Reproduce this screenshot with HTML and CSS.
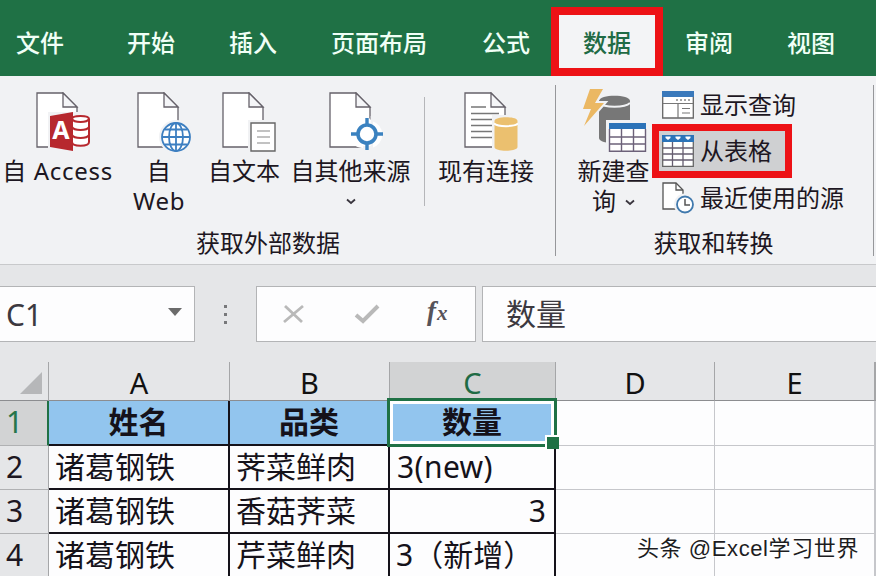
FILE: index.html
```html
<!DOCTYPE html>
<html lang="zh-CN">
<head>
<meta charset="utf-8">
<title>Excel</title>
<link rel="stylesheet" href="styles.css">
</head>
<body>
<div class="app">
  <nav class="tabs">
    <span class="tab tab-file">文件</span>
    <span class="tab">开始</span>
    <span class="tab">插入</span>
    <span class="tab">页面布局</span>
    <span class="tab tab-formula">公式</span>
    <span class="tab tab-active">数据</span>
    <span class="tab tab-review">审阅</span>
    <span class="tab">视图</span>
  </nav>

  <section class="ribbon">
    <div class="group group-external">
      <div class="tools">
        <div class="tool tool-access">
          <svg class="icon" width="54" height="60" viewBox="0 0 54 60">
            <path class="page" d="M1 1H27L41 15V55H1Z"/>
            <path class="fold" d="M27 1V15H41Z"/>
            <path d="M12 20H54V60H12Z" fill="#f1f2f4"/>
            <path d="M36 27C36 23 53 23 53 27V50C53 55 36 55 36 50Z" fill="#fff" stroke="#b7282e" stroke-width="2"/>
            <path d="M36 27C38 31 51 31 53 27M36 35C38 39 51 39 53 35M36 43C38 47 51 47 53 43" fill="none" stroke="#b7282e" stroke-width="2"/>
            <path d="M14 24L37 20V59L14 55Z" fill="#b7282e"/>
            <text x="25" y="47" class="access-letter">A</text>
          </svg>
          <span class="latin-label">自 Access</span>
        </div>
        <div class="tool tool-web">
          <svg class="icon" width="54" height="60" viewBox="0 0 54 60">
            <path class="page" d="M1 1H27L41 15V55H1Z"/>
            <path class="fold" d="M27 1V15H41Z"/>
            <circle cx="39" cy="45" r="17" fill="#f1f2f4"/>
            <circle cx="39" cy="45" r="14" fill="#fff"/>
            <g fill="none" stroke="#3d7fc1" stroke-width="1.8">
              <circle cx="39" cy="45" r="14"/>
              <ellipse cx="39" cy="45" rx="7" ry="14"/>
              <path d="M39 31V59M25 45H53M28 37.5H50M28 52.5H50"/>
            </g>
          </svg>
          <span class="latin-label">自<br>Web</span>
        </div>
        <div class="tool tool-text">
          <svg class="icon" width="54" height="60" viewBox="0 0 54 60">
            <path class="page" d="M1 1H27L41 15V55H1Z"/>
            <path class="fold" d="M27 1V15H41Z"/>
            <path d="M26 28H54V60H26Z" fill="#f1f2f4"/>
            <path d="M29 31H53V59H29Z" fill="#fff" stroke="#666" stroke-width="1.4"/>
            <path d="M35 39H48M35 45H48M35 51H48" stroke="#858585" stroke-width="1.2"/>
          </svg>
          <span>自文本</span>
        </div>
        <div class="tool tool-other">
          <svg class="icon" width="54" height="60" viewBox="0 0 54 60">
            <path class="page" d="M1 1H27L41 15V55H1Z"/>
            <path class="fold" d="M27 1V15H41Z"/>
            <path d="M38 24L43 29A14 14 0 0 1 43 56H33A14 14 0 0 1 20 42A16 16 0 0 1 33 29Z" fill="#fff"/>
            <path d="M41.700 24H44V60H34V54H41.700Z" fill="#f1f2f4"/>
            <circle cx="38" cy="42" r="9" fill="#fff" stroke="#3b82c0" stroke-width="3.600"/>
            <path d="M38 26V34M38 50V58M22 42H30M46 42H54" stroke="#3b82c0" stroke-width="3.400"/>
          </svg>
          <span>自其他来源</span>
          <svg class="chevron" width="10" height="7" viewBox="0 0 10 7"><path d="M1 1.5L5 5L9 1.5"/></svg>
        </div>
        <div class="tool-separator"></div>
        <div class="tool tool-existing">
          <svg class="icon" width="54" height="60" viewBox="0 0 54 60">
            <path class="page" d="M1 1H27L41 15V55H1Z"/>
            <path class="fold" d="M27 1V15H41Z"/>
            <path d="M7 15H22M7 21.500H35M7 27.500H35M7 33.500H28M7 39.500H28M7 45.500H28" stroke="#777" stroke-width="1.3"/>
            <path d="M28 23H56V60H28Z" fill="#f1f2f4"/>
            <path d="M30.500 29C30.500 24 53.500 24 53.500 29V55C53.500 60 30.500 60 30.500 55Z" fill="#ebc06f"/>
            <path d="M30 31.500C34 35 50 35 54 31.500" fill="none" stroke="#fff" stroke-width="2"/>
          </svg>
          <span>现有连接</span>
        </div>
      </div>
      <div class="group-name">获取外部数据</div>
    </div>

    <div class="group group-transform">
      <div class="tools">
        <div class="tool tool-query">
          <svg class="icon-query" width="66" height="64" viewBox="0 0 66 64">
            <path d="M17 13C17 6 48 6 48 13V50C48 57 17 57 17 50Z" fill="#777"/>
            <path d="M17 15C22 20 43 20 48 15" fill="none" stroke="#f1f2f4" stroke-width="1.800"/>
            <path d="M8 1L1 21H9L2 38L22 15H13L21 1Z" fill="#ebb863" stroke="#f1f2f4" stroke-width="4" paint-order="stroke"/>
            <path d="M24 32H66V64H24Z" fill="#f1f2f4"/>
            <path d="M27 36H63V64H27Z" fill="#fff"/>
            <path d="M27.500 41V63.300H63.500V41M27 49H64M27 56H64M39.500 41V63M51.500 41V63" fill="none" stroke="#6c6179" stroke-width="1.400"/>
            <path d="M27 35H64V41H27Z" fill="#2c73b8"/>
          </svg>
          <span>新建查<br>询 <svg class="chevron inline" width="10" height="7" viewBox="0 0 10 7"><path d="M1 1.5L5 5L9 1.5"/></svg></span>
        </div>
        <div class="commands">
          <div class="command">
            <svg width="32" height="28" viewBox="0 0 32 28">
              <path d="M.7 1H31.300V27H.7Z" fill="#fff" stroke="#666" stroke-width="1.300"/>
              <path d="M0 0H32V6H0Z" fill="#3a79bb"/>
              <path d="M1 12.500H31M16 12.500V27" stroke="#777" stroke-width="1.200"/>
              <path d="M14 9H29" stroke="#888" stroke-width="1.500" stroke-dasharray="2 2"/>
              <path d="M20 17.500H28M20 22H28" stroke="#777" stroke-width="1.200"/>
            </svg>
            <span>显示查询</span>
          </div>
          <div class="command command-marked">
            <svg width="32" height="32" viewBox="0 0 32 32">
              <path d="M.7 1H31.300V31.300H.7Z" fill="#fff" stroke="#666" stroke-width="1.300"/>
              <path d="M1 13H31M1 19H31M1 25H31M10.500 6V31M21 6V31" stroke="#665d70" stroke-width="1.300"/>
              <path d="M0 0H32V7H0Z" fill="#2c73b8"/>
              <path d="M3.500 1.500H8.500V3L6 5L3.500 3ZM13.500 1.500H18.500V3L16 5L13.500 3ZM23.500 1.500H28.500V3L26 5L23.500 3Z" fill="#fff"/>
            </svg>
            <span>从表格</span>
          </div>
          <div class="command">
            <svg width="32" height="32" viewBox="0 0 32 32">
              <path d="M1 1H14L21 8V27H1Z" fill="#fff" stroke="#555" stroke-width="1.300"/>
              <path d="M14 1V8H21" fill="none" stroke="#555" stroke-width="1.300"/>
              <circle cx="23" cy="22.500" r="11" fill="#f1f2f4"/>
              <circle cx="23" cy="22.500" r="8" fill="#fff" stroke="#4079ad" stroke-width="1.800"/>
              <path d="M23 17V23H28" fill="none" stroke="#555" stroke-width="1.500"/>
            </svg>
            <span>最近使用的源</span>
          </div>
        </div>
      </div>
      <div class="group-name">获取和转换</div>
    </div>
  </section>

  <section class="formula-bar">
    <div class="name-box"><span>C1</span>
      <svg width="14" height="8" viewBox="0 0 14 8"><path d="M0 0H14L7 8Z" fill="#6b6b6b"/></svg>
    </div>
    <div class="grip"><i></i><i></i><i></i></div>
    <div class="entry-tools">
      <svg width="22" height="20" viewBox="0 0 22 20"><path d="M2 2L19 18M20 2L1 18" stroke="#b9b9b9" stroke-width="2.800" fill="none"/></svg>
      <svg width="26" height="20" viewBox="0 0 26 20"><path d="M2 11L9 17L24 2" stroke="#b9b9b9" stroke-width="4" fill="none"/></svg>
      <span class="fx">f<small>x</small></span>
    </div>
    <div class="formula-input">数量</div>
  </section>

  <section class="sheet">
    <div class="head corner"><svg width="22" height="22" viewBox="0 0 22 22"><path d="M22 0V22H0Z" fill="#b6b7b9"/></svg></div>
    <div class="head">A</div><div class="head">B</div><div class="head head-active">C</div><div class="head">D</div><div class="head">E</div><div class="head"></div>

    <div class="row-head row-active">1</div>
    <div class="cell data title">姓名</div><div class="cell data title">品类</div><div class="cell data title selected">数量</div><div class="cell"></div><div class="cell"></div><div class="cell"></div>

    <div class="row-head">2</div>
    <div class="cell data">诸葛钢铁</div><div class="cell data">荠菜鲜肉</div><div class="cell data latin">3(new)</div><div class="cell"></div><div class="cell"></div><div class="cell"></div>

    <div class="row-head">3</div>
    <div class="cell data">诸葛钢铁</div><div class="cell data">香菇荠菜</div><div class="cell data number">3</div><div class="cell"></div><div class="cell"></div><div class="cell"></div>

    <div class="row-head">4</div>
    <div class="cell data">诸葛钢铁</div><div class="cell data">芹菜鲜肉</div><div class="cell data">3（新增）</div><div class="cell"></div><div class="cell"></div><div class="cell"></div>
  </section>
  <div class="watermark">头条 @Excel学习世界</div>
</div>
</body>
</html>
```
FILE: styles.css
```css
* { box-sizing: border-box; }
body {
  margin: 0;
  font-family: "Noto Sans", "Noto Sans CJK SC", sans-serif;
  color: #1d1722;
}
svg { display: block; flex: none; }
.app {
  position: relative;
  width: 876px;
  height: 576px;
  overflow: hidden;
  display: flex;
  flex-direction: column;
  background: #e5e6e8;
}

/* tab strip */
.tabs {
  height: 76px;
  flex: none;
  display: flex;
  background: #1f7145;
  color: #f0fff6;
  font: 500 24px/70px "Noto Sans CJK SC", sans-serif;
  padding-top: 7px;
}
.tab { padding: 0 27px; white-space: nowrap; }
.tab-file { padding-left: 16px; padding-right: 36px; }
.tab-formula { padding-left: 28px; padding-right: 21px; }
.tab-active {
  width: 112px;
  height: 69px;
  padding: 0;
  border: 8px solid #ed1216;
  background: #f3f4f6;
  color: #1f6b45;
  text-align: center;
  line-height: 54px;
}
.tab-review { padding-left: 22px; }

/* ribbon */
.ribbon {
  height: 189px;
  flex: none;
  display: flex;
  background: #f1f2f4;
  border-bottom: 1px solid #c8c9cb;
  padding-top: 9px;
  font-size: 24px;
  line-height: 30px;
}
.group {
  height: 171px;
  display: flex;
  flex-direction: column;
  justify-content: space-between;
  border-right: 1px solid #96979a;
}
.group-external { width: 556px; }
.group-transform { width: 318px; }
.group-name { text-align: center; margin-bottom: -2px; }
.group-external .group-name { padding-right: 19px; }
.group-transform .group-name { padding-right: 2px; }
.tools { display: flex; }
.tool {
  display: flex;
  flex-direction: column;
  align-items: center;
  text-align: center;
  white-space: nowrap;
  padding-top: 7px;
}
.icon { margin: 0 0 4px 10px; }
.page { fill: #fff; stroke: #66626a; stroke-width: 1.3; }
.fold { fill: #f5f6f8; stroke: #66626a; stroke-width: 1.3; }
.access-letter { font: bold 25px "Noto Sans", sans-serif; fill: #fff; text-anchor: middle; }
.latin-label { letter-spacing: .7px; }
.tool-access { width: 115px; }
.tool-web { width: 88px; }
.tool-text { width: 82px; }
.tool-other { width: 131px; }
.tool-separator { width: 1px; height: 109px; margin: 12px 0 0 8px; background: #b5b6b9; }
.tool-existing { width: 122px; }
.chevron { fill: none; stroke: #3a363e; stroke-width: 1.8; margin-top: 12px; }
.chevron.inline { display: inline-block; margin: 0 0 4px 3px; }
.tool-query { width: 96px; padding: 3px 0 0 19px; }
.icon-query { margin: 0 0 4px 7px; align-self: flex-start; }
.commands { display: flex; flex-direction: column; }
.command {
  display: flex;
  align-items: center;
  gap: 6px;
  height: 39px;
  padding-left: 10px;
  white-space: nowrap;
}
.command-marked {
  width: 140px;
  height: 54px;
  padding-left: 3px;
  border: 7px solid #ed1216;
  background: #cfd0d2;
}

/* formula bar */
.formula-bar {
  height: 97px;
  flex: none;
  display: flex;
  align-items: flex-start;
  padding-top: 21px;
  font-size: 30px;
}
.formula-bar > div { flex: none; }
.name-box, .entry-tools, .formula-input {
  height: 56px;
  background: #fdfdfe;
  border: 1px solid #b3b4b6;
  display: flex;
  align-items: center;
}
.name-box {
  width: 195px;
  border-left: 0;
  padding: 0 12px 0 6px;
  justify-content: space-between;
  color: #3c3940;
}
.name-box svg { margin-top: -4px; }
.grip { width: 61px; height: 56px; display: flex; flex-direction: column; align-items: center; justify-content: center; gap: 5px; }
.grip i { width: 3px; height: 3px; background: #77787a; }
.entry-tools { width: 220px; padding-left: 26px; }
.entry-tools svg + svg { margin-left: 49px; }
.fx { margin: -4px 0 0 47px; font: italic bold 27px/40px "Liberation Serif", serif; color: #56535a; }
.fx small { font-size: 21px; margin-left: 1px; }
.formula-input { width: 400px; margin-left: 6px; padding: 0 0 5px 23px; color: #3c3940; }

/* worksheet */
.sheet {
  flex: none;
  display: grid;
  grid-template-columns: 49px 181px 160px 166px 159px 160px 1fr;
  grid-template-rows: 39px 45px 44px 44px 44px;
  font-size: 30px;
  line-height: 42px;
}
.head {
  border-right: 1px solid #a5a6a8;
  border-bottom: 1px solid #8c8d90;
  text-align: center;
  color: #111;
  font-size: 29px;
}
.head-active { background: #d2d3d4; color: #1f6b45; }
.corner { display: flex; justify-content: flex-end; align-items: flex-end; padding: 0 6px 6px 0; }
.row-head { border-right: 1px solid #a5a6a8; border-bottom: 1px solid #b0b1b3; padding-left: 6px; }
.row-active { background: #d2d3d4; color: #26754b; border-right: 2px solid #1f7145; }
.cell { background: #fdfdfe; border-right: 1px solid #c6c7cb; border-bottom: 1px solid #c6c7cb; white-space: nowrap; }
.data { border-right: 2px solid #15121a; border-bottom: 2px solid #15121a; padding-left: 6px; color: #15121a; }
.latin { padding-left: 7px; letter-spacing: .4px; }
.title { background: #92c5ee; text-align: center; font-weight: 700; padding: 0; }
.number { text-align: right; padding-right: 8px; }
.selected { position: relative; }
.selected::before {
  content: "";
  position: absolute;
  inset: -3px;
  border: 3px solid #1f7145;
  box-shadow: inset 0 0 0 3px #fff;
}
.selected::after {
  content: "";
  position: absolute;
  right: -5px;
  bottom: -5px;
  width: 12px;
  height: 12px;
  background: #1f7145;
  border: solid #fff;
  border-width: 2px 0 0 2px;
}
.watermark {
  position: absolute;
  right: 17px;
  bottom: 11px;
  font: 22px/32px "Liberation Sans", "Noto Sans CJK SC", sans-serif;
  letter-spacing: .6px;
  color: #1d1d1f;
  text-shadow: 1px 1px 0 #fff, -1px -1px 0 #fff;
  white-space: nowrap;
}
```
